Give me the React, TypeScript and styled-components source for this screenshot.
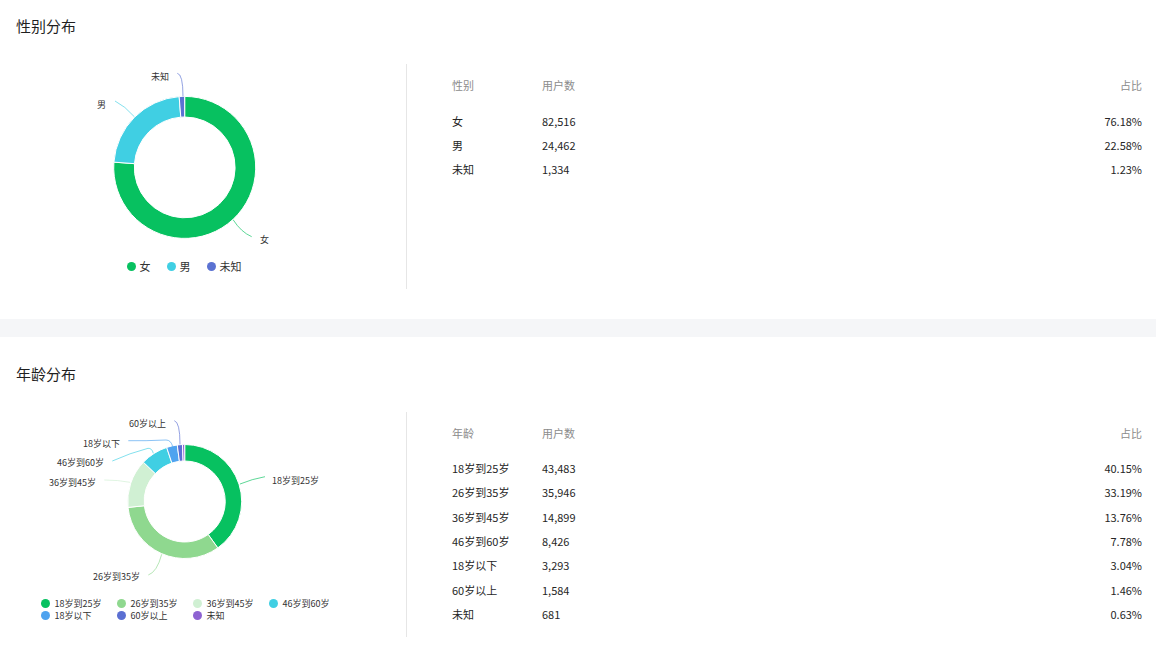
import React from 'react'
import styled, { createGlobalStyle } from 'styled-components'

const GlobalStyle = createGlobalStyle`
  html, body {
    margin: 0;
    padding: 0;
    height: 662px;
    overflow: hidden;
    background: #f5f6f8;
    font-family: "Noto Sans CJK SC", "Noto Sans", sans-serif;
    color: #262626;
  }
`

const Section = styled.section<{ $top: number; $bottom: number }>`
  background: #fff;
  padding: ${props => props.$top}px 0 ${props => props.$bottom}px;
  & + & {
    margin-top: 18px;
  }
`

const Title = styled.h2`
  margin: 0;
  padding-left: 16px;
  height: 38px;
  font-size: 15px;
  line-height: 38px;
  font-weight: 400;
  color: #1f1f1f;
`

const Body = styled.div`
  display: flex;
  height: 225px;
  margin-top: 19px;
`

const ChartPane = styled.div`
  width: 370px;
  flex: none;
  padding-right: 36px;
  border-right: 1px solid #e6e6e6;
`

const Chart = styled.svg`
  display: block;
  width: 370px;
`

const CalloutText = styled.text`
  font-size: 9px;
  fill: #333;
  dominant-baseline: central;
`

const Legend = styled.div`
  display: flex;
  justify-content: center;
  gap: 16px;
  height: 16px;
  margin-top: 4px;
  padding-right: 2px;
`

const GridLegend = styled.div`
  display: grid;
  grid-template-columns: repeat(4, 76px);
  grid-auto-rows: 12.5px;
  padding-left: 41px;
  margin-top: 4px;
`

const LegendItem = styled.div<{ $small?: boolean }>`
  display: flex;
  align-items: center;
  gap: ${props => (props.$small ? 4.5 : 4)}px;
  font-size: ${props => (props.$small ? 9 : 11)}px;
  color: #333;
  white-space: nowrap;
`

const Dot = styled.span<{ $color: string }>`
  width: 9px;
  height: 9px;
  flex: none;
  border-radius: 50%;
  background: ${props => props.$color};
`

const TablePane = styled.div`
  flex: 1;
  padding: 0 14px 0 45px;
`

const Table = styled.table`
  width: 100%;
  border-collapse: collapse;
  table-layout: fixed;
  font-size: 11px;
`

const HeadCell = styled.th<{ $width?: number; $right?: boolean; $height: number }>`
  width: ${props => (props.$width ? `${props.$width}px` : 'auto')};
  height: ${props => props.$height}px;
  padding: 0;
  vertical-align: top;
  line-height: 43px;
  font-weight: 400;
  color: #8c8c8c;
  text-align: ${props => (props.$right ? 'right' : 'left')};
`

const Cell = styled.td<{ $right?: boolean; $row: number }>`
  height: ${props => props.$row}px;
  padding: 0;
  line-height: ${props => props.$row}px;
  color: #262626;
  text-align: ${props => (props.$right ? 'right' : 'left')};
`

type Slice = {
  name: string
  users: string
  share: number
  color: string
  line?: string
  label?: { x: number; y: number }
}

const arc = (cx: number, cy: number, R: number, r: number, from: number, to: number) => {
  const pt = (rad: number, pct: number) => {
    const a = (pct / 100) * Math.PI * 2
    return `${(cx + rad * Math.sin(a)).toFixed(2)} ${(cy - rad * Math.cos(a)).toFixed(2)}`
  }
  const large = to - from > 50 ? 1 : 0
  return `M${pt(R, from)} A${R} ${R} 0 ${large} 1 ${pt(R, to)} L${pt(r, to)} A${r} ${r} 0 ${large} 0 ${pt(r, from)} Z`
}

const gender: Slice[] = [
  { name: '女', users: '82,516', share: 76.18, color: '#07c160', line: 'M233.3 156 Q241 168 251.7 172.7', label: { x: 260, y: 175 } },
  { name: '男', users: '24,462', share: 22.58, color: '#40cfe3', line: 'M134.3 52.7 Q125 42 115 37', label: { x: 97, y: 40 } },
  { name: '未知', users: '1,334', share: 1.23, color: '#5b72d2', line: 'M183 32.7 Q183 10 177.3 9.3', label: { x: 151, y: 12 } },
]

const age: Slice[] = [
  { name: '18岁到25岁', users: '43,483', share: 40.15, color: '#07c160', line: 'M240 72 Q252 67 265 64.7', label: { x: 272, y: 68 } },
  { name: '26岁到35岁', users: '35,946', share: 33.19, color: '#8fd88f', line: 'M161.7 142.3 Q157 160 148.3 163', label: { x: 93, y: 164 } },
  { name: '36岁到45岁', users: '14,899', share: 13.76, color: '#d0f0d3', line: 'M130 70.3 Q118 68 104.3 68', label: { x: 49, y: 70.7 } },
  { name: '46岁到60岁', users: '8,426', share: 7.78, color: '#40cfe3', line: 'M153.3 41.3 Q152 36 148 36.3 Q130 41 112.3 49', label: { x: 57, y: 50 } },
  { name: '18岁以下', users: '3,293', share: 3.04, color: '#4fa3ef', line: 'M172.7 34.7 Q171 28 166 28 Q145 29 128.3 28.7', label: { x: 83, y: 31 } },
  { name: '60岁以上', users: '1,584', share: 1.46, color: '#5b6fd2', line: 'M180 32.3 Q180 10 174.3 8.7', label: { x: 129, y: 11 } },
  { name: '未知', users: '681', share: 0.63, color: '#8e63d2' },
]

const Donut = ({ data, height, cy, R, r }: { data: Slice[]; height: number; cy: number; R: number; r: number }) => {
  let start = 0
  return (
    <Chart height={height} viewBox={`0 0 370 ${height}`}>
      {data.map(s => {
        const d = arc(184.7, cy, R, r, start, start + s.share)
        start += s.share
        return <path key={s.name} d={d} fill={s.color} stroke="#fff" strokeWidth={1} />
      })}
      {data.map(s => s.line && (
        <path key={s.name} d={s.line} fill="none" stroke={s.color} strokeOpacity={0.65} strokeWidth={1} />
      ))}
      {data.map(s => s.label && (
        <CalloutText key={s.name} x={s.label.x} y={s.label.y}>{s.name}</CalloutText>
      ))}
    </Chart>
  )
}

const DataTable = ({ head, data, headHeight, row }: { head: string; data: Slice[]; headHeight: number; row: number }) => (
  <TablePane>
    <Table>
      <thead>
        <tr>
          <HeadCell $width={90} $height={headHeight}>{head}</HeadCell>
          <HeadCell $height={headHeight}>用户数</HeadCell>
          <HeadCell $right $height={headHeight}>占比</HeadCell>
        </tr>
      </thead>
      <tbody>
        {data.map(s => (
          <tr key={s.name}>
            <Cell $row={row}>{s.name}</Cell>
            <Cell $row={row}>{s.users}</Cell>
            <Cell $right $row={row}>{s.share.toFixed(2)}%</Cell>
          </tr>
        ))}
      </tbody>
    </Table>
  </TablePane>
)

const App = () => (
  <>
    <GlobalStyle />
    <Section $top={7} $bottom={30}>
      <Title>性别分布</Title>
      <Body>
        <ChartPane>
          <Donut data={gender} height={190} cy={103.4} R={71} r={50.4} />
          <Legend>
            {gender.map(s => (
              <LegendItem key={s.name}><Dot $color={s.color} />{s.name}</LegendItem>
            ))}
          </Legend>
        </ChartPane>
        <DataTable head="性别" data={gender} headHeight={45} row={24} />
      </Body>
    </Section>
    <Section $top={18} $bottom={25}>
      <Title>年龄分布</Title>
      <Body>
        <ChartPane>
          <Donut data={age} height={181} cy={89.5} R={57} r={40.5} />
          <GridLegend>
            {age.map(s => (
              <LegendItem key={s.name} $small><Dot $color={s.color} />{s.name}</LegendItem>
            ))}
          </GridLegend>
        </ChartPane>
        <DataTable head="年龄" data={age} headHeight={44} row={24.33} />
      </Body>
    </Section>
  </>
)

export default App
